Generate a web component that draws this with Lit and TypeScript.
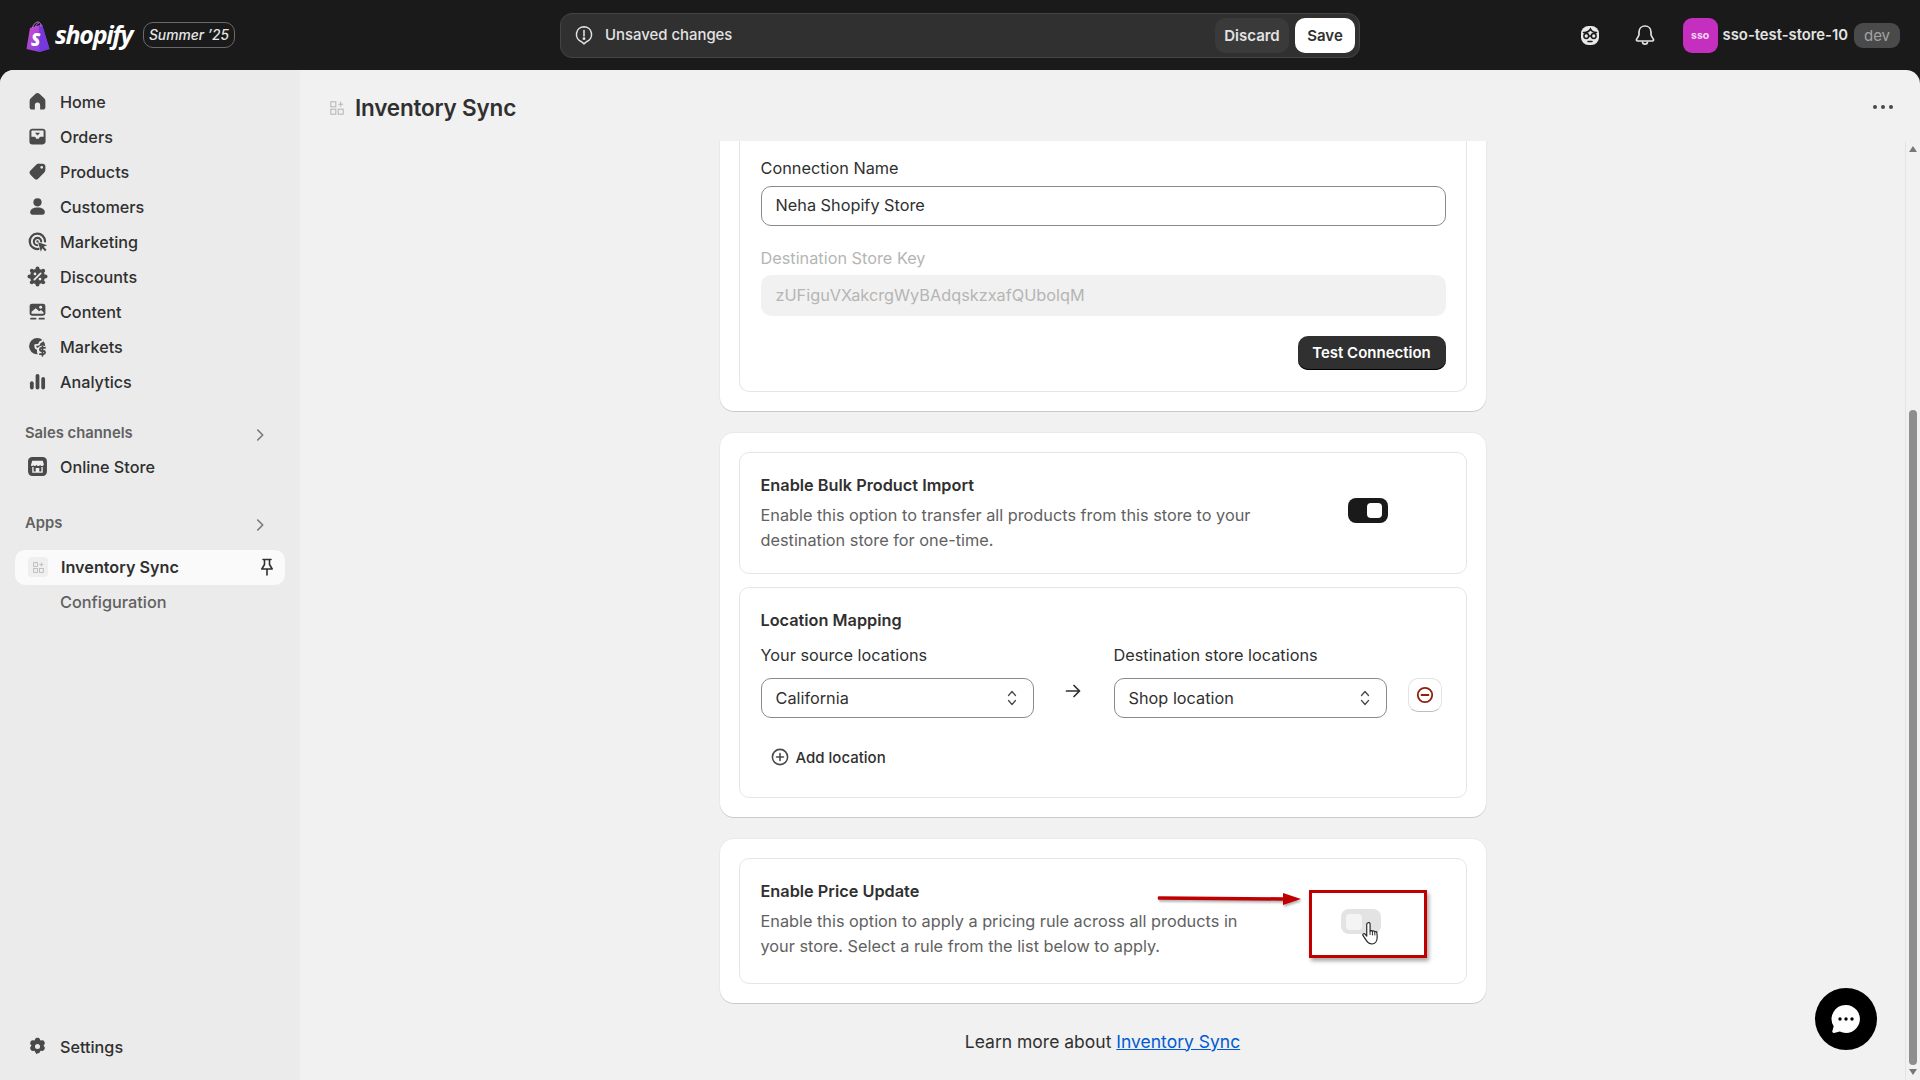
import { LitElement, html, css, svg } from "lit";
import { customElement } from "lit/decorators.js";

const BG = "#ebebeb";
const I: Record<string, any> = {
  home: svg`<path fill-rule="evenodd" d="M10 2c-.7 0-1.300.3-1.800.7L3.600 6.800c-.7.6-1.100 1.500-1.100 2.400v6.200c0 1.300 1 2.300 2.300 2.300h2.700V13.500a2.500 2.500 0 0 1 5 0v4.200h2.700c1.300 0 2.300-1 2.300-2.300V9.200c0-.9-.4-1.800-1.100-2.400l-4.600-4.100C11.300 2.300 10.700 2 10 2Z"/>`,
  orders: svg`<path fill-rule="evenodd" d="M5 2.500h10c1.500 0 2.700 1.200 2.700 2.700v9.600c0 1.500-1.200 2.700-2.700 2.700H5a2.700 2.700 0 0 1-2.700-2.700V5.200C2.300 3.700 3.500 2.500 5 2.500Zm-.8 2.300v5.400h2.900c.5 0 .9.300 1.100.7l.6 1.300h2.400l.6-1.300c.2-.4.6-.7 1.100-.7h2.900V4.800c0-.3-.2-.5-.5-.5H4.700c-.3 0-.5.200-.5.500Z"/><path d="M7.500 6.500h5L10 9z"/>`,
  products: svg`<path fill-rule="evenodd" d="M11.600 2.500h3.400c1.400 0 2.500 1.100 2.500 2.500v3.400c0 .9-.4 1.800-1 2.500l-5.900 5.900a2.500 2.500 0 0 1-3.500 0l-4-4a2.500 2.500 0 0 1 0-3.500l5.900-5.900c.7-.6 1.600-1 2.600-1ZM14 7.300a1.300 1.300 0 1 0 0-2.600 1.300 1.300 0 0 0 0 2.600Z"/>`,
  customers: svg`<circle cx="10" cy="6" r="3.900"/><path d="M3 15.700c0-3 2.800-4.700 7-4.700s7 1.700 7 4.700c0 1.200-1 2.100-2.200 2.100H5.200C4 17.800 3 16.900 3 15.700Z"/>`,
  marketing: svg`<path d="M11 17.100A7.300 7.300 0 1 1 17.200 10" fill="none" stroke="currentColor" stroke-width="2.100" stroke-linecap="round"/><path d="M9.800 13.500A3.500 3.500 0 1 1 13.500 10" fill="none" stroke="currentColor" stroke-width="2" stroke-linecap="round"/><circle cx="10" cy="10" r="1.100"/><path d="M10.600 10.600l8.600 3-3.300 1.500 2.700 2.800-1.400 1.300-2.600-2.800-1.400 3.300z"/>`,
  discounts: svg`<circle cx="10" cy="10" r="7.300"/>${[0, 45, 90, 135, 180, 225, 270, 315].map((a) => svg`<circle cx=${10 + 7.600 * Math.cos((a * Math.PI) / 180)} cy=${10 + 7.600 * Math.sin((a * Math.PI) / 180)} r="1.900"/>`)}<circle cx="7.600" cy="7.600" r="1.300" fill="${BG}"/><circle cx="12.400" cy="12.400" r="1.300" fill="${BG}"/><path d="M13 7l-6 6" stroke="${BG}" stroke-width="1.700" stroke-linecap="round"/>`,
  content: svg`<rect x="2.500" y="2.500" width="15" height="11.500" rx="2.300"/><path d="M4.300 10.300 8.300 6.800l3.300 2.900 1.700-1.100 2.400 2v1.500H4.300z" fill="${BG}"/><circle cx="13" cy="5.900" r="1.400" fill="${BG}"/><rect x="3" y="16" width="6" height="1.700" rx=".8"/><rect x="11" y="16" width="6" height="1.700" rx=".8"/>`,
  markets: svg`<circle cx="9.700" cy="9.700" r="7.700"/><path d="M15.500 4.300 12.300 6l-1 2.200-3.500.5.400 2.600 2.600 1.500v3.700" fill="none" stroke="${BG}" stroke-width="1.800" stroke-linejoin="round"/><circle cx="14.700" cy="14.300" r="5.300" fill="${BG}"/><path d="M17.200 11.300h-3.400a1.500 1.500 0 0 0 0 3h1.900a1.500 1.500 0 0 1 0 3h-3.400M14.700 9.800v9" fill="none" stroke="currentColor" stroke-width="1.700" stroke-linecap="round"/>`,
  analytics: svg`<rect x="2.800" y="9.800" width="3.600" height="7.700" rx="1.800"/><rect x="8.200" y="2.800" width="3.600" height="14.700" rx="1.800"/><rect x="13.600" y="5.800" width="3.600" height="11.700" rx="1.800"/>`,
  store: svg`<rect x="1" y="1" width="18" height="18" rx="4"/><path d="M5 4.500h10l1 3.300c0 1-.8 1.700-1.700 1.700-.8 0-1.600-.5-1.800-1.200-.3.700-1 1.200-1.700 1.200s-1.500-.4-1.800-1.200c-.3.800-1 1.200-1.800 1.200S6.400 9 6.200 8.300C6 9 5.400 9.500 4.700 9.500 4 9.500 3.500 8.700 4 7.800z" fill="#f0f0f0"/><path d="M5 10.500h1.300v4.200h2v-3.200h3.400v3.200h2v-4.200H15V16H5z" fill="#f0f0f0"/>`,
  settings: svg`<path fill-rule="evenodd" d="M8.300 2.300c.5-.9 2.900-.9 3.400 0l.7 1.500 1.600-.2c1-.1 2.200 2 1.700 2.900l-.9 1.300.9 1.300c.5.900-.7 3-1.700 2.900l-1.600-.2-.7 1.500c-.5.900-2.900.9-3.400 0l-.7-1.500-1.600.2c-1 .1-2.200-2-1.700-2.900l.9-1.300-.9-1.300c-.5-.9.700-3 1.700-2.900l1.600.2ZM10 10.500a2 2 0 1 0 0-4 2 2 0 0 0 0 4Z" transform="translate(-2 -.2) scale(1.200)"/>`,
};

const icon = (k: string, cls = "ic") => html`<svg class=${cls} viewBox="0 0 20 20" fill="currentColor">${I[k]}</svg>`;

const appGlyph = html`<svg class="appg" viewBox="0 0 14 14" fill="none" stroke="currentColor" stroke-width="1.100"><rect x=".8" y=".8" width="5" height="5"/><rect x=".8" y="8.200" width="5" height="5"/><rect x="8.200" y="8.200" width="5" height="5"/><path d="M10.700 .8v5M8.200 3.300h5"/></svg>`;

const chevR = html`<svg class="chev" viewBox="0 0 20 20" fill="none" stroke="currentColor" stroke-width="1.800" stroke-linecap="round" stroke-linejoin="round"><path d="M7.500 4.500 13 10l-5.500 5.500"/></svg>`;

const updown = html`<svg class="ud" viewBox="0 0 12 20" fill="none" stroke="currentColor" stroke-width="1.300" stroke-linecap="round" stroke-linejoin="round"><path d="M2.500 7.500 6 3.500l3.500 4M2.500 12.500 6 16.500l3.500-4"/></svg>`;

const nav = [
  ["home", "Home"], ["orders", "Orders"], ["products", "Products"], ["customers", "Customers"],
  ["marketing", "Marketing"], ["discounts", "Discounts"], ["content", "Content"], ["markets", "Markets"], ["analytics", "Analytics"],
];

@customElement("app-root")
export class AppRoot extends LitElement {
  static styles = css`
    :host { display: block; width: 1920px; height: 1080px; overflow: hidden; background: #1a1a1a; font-family: Inter, "Liberation Sans", sans-serif; color: #303030; font-size: 16.300px; }
    * { box-sizing: border-box; }
    .top { height: 70px; display: flex; align-items: center; padding: 0 20px 0 26px; position: relative; }
    .logo { display: flex; align-items: center; gap: 5px; width: 117px; }
    .bag { width: 24px; height: 31px; margin-top: 2px; flex: none; }
    .word { font: italic 700 25px "Open Sans", sans-serif; color: #fff; letter-spacing: -1.300px; line-height: 1; margin-top: -2px; }
    .season { width: 92px; height: 26px; border: 1px solid #6a6a6a; border-radius: 10px; display: flex; align-items: center; justify-content: center; color: #e6e6e6; font-style: italic; font-size: 13.800px; font-weight: 500; }
    .bar { position: absolute; left: 560px; top: 13px; width: 800px; height: 45px; background: #303030; border: 1px solid #444; border-radius: 12px; display: flex; align-items: center; padding: 0 4px 0 12px; color: #e3e3e3; }
    .bar svg { width: 22px; height: 22px; margin-right: 10px; margin-top: -1px; flex: none; }
    .bar .msg { flex: 1; font-size: 14.900px; font-weight: 500; margin-top: -1px; }
    .btn { height: 35px; border-radius: 10px; display: flex; align-items: center; justify-content: center; font-weight: 600; font-size: 15px; }
    .discard { width: 74px; background: #3a3a3a; color: #e3e3e3; margin-right: 6px; }
    .save { width: 60px; background: #fff; color: #303030; }
    .right { margin-left: auto; display: flex; align-items: center; }
    .tico { width: 24px; height: 24px; color: #e3e3e3; flex: none; }
    .right .face { margin-right: 31px; }
    .right .bell { margin-right: 26px; }
    .avatar { width: 35px; height: 35px; border-radius: 9px; background: #c42fc0; color: #f9d8f6; font-size: 10.500px; font-weight: 700; display: flex; align-items: center; justify-content: center; margin-right: 5px; }
    .shop { color: #e3e3e3; font-size: 14.800px; font-weight: 600; margin-right: 6px; white-space: nowrap; }
    .dev { width: 46px; height: 25px; border-radius: 9px; background: #4a4a4a; color: #a3a3a3; font-size: 15px; display: flex; align-items: center; justify-content: center; }

    .body { height: 1010px; display: flex; background: #f1f1f1; border-radius: 14px 14px 0 0; overflow: hidden; }
    .side { width: 300px; flex: none; background: #ebebeb; padding: 14px 15px 16px; display: flex; flex-direction: column; }
    .item { height: 35px; display: flex; align-items: center; padding-left: 12px; gap: 12px; font-weight: 500; font-size: 16.200px; color: #303030; flex: none; }
    .ic { width: 21px; height: 21px; color: #4a4a4a; flex: none; }
    .sec { height: 35px; display: flex; align-items: center; justify-content: space-between; padding: 0 16px 0 10px; font-size: 14.800px; font-weight: 600; color: #616161; flex: none; }
    .chev { width: 18px; height: 18px; color: #777; margin-top: 4px; }
    .sec.a { margin-top: 16px; margin-bottom: -1px; }
    .sec.b { margin-top: 21px; margin-bottom: 9.500px; }
    .item.active { background: #fafafa; border-radius: 10px; font-weight: 600; height: 35px; padding-right: 8px; }
    .tile { width: 20px; height: 20px; border-radius: 4px; background: #efefef; color: #b9b9b9; display: flex; align-items: center; justify-content: center; margin: 0 1px 0 1px; flex: none; }
    .appg { width: 11px; height: 11px; }
    .pin { width: 20px; height: 20px; margin-left: auto; color: #303030; }
    .sub { height: 35px; padding-left: 45px; display: flex; align-items: center; color: #616161; font-weight: 500; flex: none; }
    .settings { margin-top: auto; }

    .main { flex: 1; min-width: 0; display: flex; flex-direction: column; }
    .head { height: 71px; flex: none; display: flex; align-items: center; padding: 4px 27px 0 30px; }
    .head .appg { width: 14px; height: 14px; color: #b9b9b9; margin-right: 11px; }
    .head h1 { margin: 0; font-size: 22.500px; font-weight: 600; color: #303030; letter-spacing: -.2px; }
    .dots { margin-left: auto; display: flex; gap: 4px; margin-top: -2px; }
    .dots i { width: 4px; height: 4px; border-radius: 50%; background: #4a4a4a; }
    .scrollwrap { flex: 1; min-height: 0; display: flex; }
    .scroll { flex: 1; min-width: 0; display: flex; flex-direction: column; align-items: center; gap: 22px; overflow: hidden; }
    .sbar { width: 15px; flex: none; background: #f1f1f1; border-left: 1px solid #e4e4e4; display: flex; flex-direction: column; align-items: center; position: relative; }
    .tri { width: 0; height: 0; border-left: 4.500px solid transparent; border-right: 4.500px solid transparent; }
    .tri.up { border-bottom: 6px solid #777; margin-top: 5px; }
    .tri.dn { border-top: 6px solid #777; margin-top: 4px; }
    .thumb { width: 8px; height: 655px; background: #8e8e8e; border-radius: 4px; margin-top: 258px; }

    .card { width: 766px; background: #fff; border-radius: 14px; padding: 19px; box-shadow: 0 1px 0 rgba(0,0,0,.13), 0 0 0 1px rgba(0,0,0,.03); display: flex; flex-direction: column; gap: 13px; flex: none; }
    .card.first { border-radius: 0 0 14px 14px; padding-top: 0; }
    .inner { border: 1px solid #e6e6e6; border-radius: 10px; padding: 19px 20px 19px 21px; }
    .first .inner { border-top: 0; border-radius: 0 0 10px 10px; padding: 15px 20px 21px 21px; }
    .inner.bulk { padding-top: 19.500px; padding-bottom: 21.300px; }
    .inner.bulk .desc { margin-top: 6.700px; }
    .inner.loc { padding-top: 19.500px; padding-bottom: 19.500px; }
    .inner.price { padding-top: 20.200px; padding-bottom: 25px; }
    .inner.price .desc { margin-top: 6px; }
    label, .lbl { display: block; line-height: 24px; color: #303030; font-size: 16.300px; font-weight: 400; }
    .input { height: 40px; border: 1px solid #8a8a8a; border-radius: 10px; display: flex; align-items: center; padding: 0 14px 2px; margin-top: 6px; color: #303030; }
    .lbl.dis { color: #b5b5b5; margin-top: 20px; }
    .input.dis { height: 41px; border: 0; background: #f1f1f1; color: #b5b5b5; margin-top: 5px; padding-left: 15px; }
    .tc { width: 148px; height: 34.500px; background: #303030; color: #fff; border-radius: 10px; margin: 19.500px 0 0 auto; display: flex; align-items: center; justify-content: center; font-weight: 600; font-size: 15px; box-shadow: inset 0 -1px 0 #000; }
    .row { display: flex; align-items: flex-start; }
    .title { line-height: 24px; font-weight: 600; font-size: 16.300px; color: #303030; }
    .desc { line-height: 24.500px; color: #616161; margin-top: 6px; width: 500px; }
    .toggle { width: 40px; height: 25px; border-radius: 8px; flex: none; position: relative; }
    .toggle i { position: absolute; top: 5px; width: 15px; height: 15px; border-radius: 4px; }
    .toggle.on { background: #1a1a1a; margin: 25.700px 0 0 87px; }
    .toggle.on i { left: 19px; background: #fff; }
    .toggle.off { background: #e3e3e3; margin: 29.800px 0 0 80px; }
    .toggle.off i { left: 5px; width: 16px; height: 16px; background: #f4f4f4; }
    .labels { display: grid; grid-template-columns: 273px 273px; column-gap: 80px; margin-top: 11px; }
    .map { display: flex; margin-top: 11px; align-items: flex-start; }
    .sel { width: 273px; height: 40px; border: 1px solid #8a8a8a; border-radius: 10px; display: flex; align-items: center; justify-content: space-between; padding: 0 14px 0 14px; flex: none; }
    .ud { width: 12px; height: 20px; color: #4a4a4a; margin-right: 1px; }
    .arr { width: 80px; display: flex; justify-content: center; padding-top: 3px; flex: none; }
    .arr svg { width: 20px; height: 20px; color: #303030; margin-left: -1px; }
    .rm { width: 34px; height: 34px; border-radius: 10px; background: #fff; border: 1px solid #e3e3e3; border-bottom-color: #bdbdbd; margin-left: 21px; display: flex; align-items: center; justify-content: center; color: #8e1f0b; }
    .rm svg { width: 20px; height: 20px; }
    .add { height: 40px; margin-top: 19.500px; display: flex; align-items: center; padding-left: 9px; gap: 6px; font-weight: 500; font-size: 15px; }
    .add svg { width: 20px; height: 20px; color: #4a4a4a; }
    .foot { flex: none; text-align: center; font-size: 17.500px; color: #303030; margin-top: 4.500px; line-height: 24px; }
    .foot a { color: #005bd3; text-decoration: underline; }
    .annot { position: absolute; pointer-events: none; }
    .rbox { left: -32px; top: -19px; width: 118px; height: 68px; border: 3px solid #c00000; box-shadow: 2px 3px 4px rgba(0,0,0,.35); }
    .rarrow { left: -182px; top: -18px; width: 142px; height: 16px; overflow: visible; filter: drop-shadow(1px 2px 1px rgba(0,0,0,.3)); }
    .hand { left: 21px; top: 12px; width: 19px; height: 25px; }
    .chat { position: absolute; left: 1815px; top: 988px; width: 62px; height: 62px; border-radius: 50%; background: #000; display: flex; align-items: center; justify-content: center; }
    .chat svg { width: 32px; height: 32px; }
    .toplayer { position: relative; }
  `;

  render() {
    return html`
      <div class="toplayer">
        <div class="top">
          <div class="logo">
            <svg class="bag" viewBox="0 0 24 31">
              <defs><linearGradient id="g" x1="0" y1="0" x2="1" y2="1"><stop offset="0" stop-color="#d94bd0"/><stop offset="1" stop-color="#6b3cdc"/></linearGradient></defs>
              <path d="M4 7 16 3.500 23.500 28 13.500 31 .5 28z" fill="url(#g)"/>
              <path d="M16 3.500 23.500 28 13.500 31 13 4.500z" fill="#7438dc"/>
              <path d="M6.500 7c.5-3 3-6 5.500-6 2 0 3 2 3 4.500M9.500 6c.5-2 1.500-3.500 3-3.500" fill="none" stroke="#c27cd6" stroke-width="1"/>
              <text x="5" y="25" font-family="Open Sans" font-style="italic" font-weight="800" font-size="17" fill="#fff">S</text>
            </svg>
            <span class="word">shopify</span>
          </div>
          <div class="season">Summer ’25</div>

          <div class="bar">
            <svg viewBox="0 0 20 20" fill="none" stroke="currentColor" stroke-width="1.400"><path d="M10 2.500a7 7 0 0 0-2.200 13.600L10 18l2.200-1.900A7 7 0 0 0 10 2.500Z" stroke-linejoin="round"/><path d="M10 6v5" stroke-linecap="round"/><circle cx="10" cy="13.300" r=".6" fill="currentColor"/></svg>
            <span class="msg">Unsaved changes</span>
            <div class="btn discard">Discard</div>
            <div class="btn save">Save</div>
          </div>

          <div class="right">
            <svg class="tico face" viewBox="0 0 24 24"><rect x="3" y="3" width="18" height="19" rx="7.500" fill="#e8e8e8"/><path d="M5.500 9.500c3 .2 5.500-1 7-3.500.8 2 3 3.500 6 3.500" fill="none" stroke="#1a1a1a" stroke-width="1.500" stroke-linecap="round"/><circle cx="8.300" cy="13" r="2.400" fill="none" stroke="#1a1a1a" stroke-width="1.500"/><circle cx="15.700" cy="13" r="2.400" fill="none" stroke="#1a1a1a" stroke-width="1.500"/><path d="M10.500 13h3M10 18.500h4" stroke="#1a1a1a" stroke-width="1.500" stroke-linecap="round"/></svg>
            <svg class="tico bell" viewBox="0 0 24 24" fill="none" stroke="currentColor" stroke-width="1.700" stroke-linejoin="round"><path d="M12 3c-3.500 0-6 2.600-6 6v2.500c0 1.800-2 3.500-2.500 5-.2.800.3 1.500 1 1.500h15c.7 0 1.200-.7 1-1.500-.5-1.500-2.500-3.200-2.500-5V9c0-3.400-2.500-6-6-6Z"/><path d="M9.500 18.500c0 1.500 1 2.700 2.500 2.700s2.500-1.200 2.500-2.700"/></svg>
            <div class="avatar">sso</div>
            <span class="shop">sso-test-store-10</span>
            <div class="dev">dev</div>
          </div>
        </div>

        <div class="body">
          <aside class="side">
            ${nav.map(([k, t]) => html`<div class="item">${icon(k)}<span>${t}</span></div>`)}
            <div class="sec a"><span>Sales channels</span>${chevR}</div>
            <div class="item">${icon("store")}<span>Online Store</span></div>
            <div class="sec b"><span>Apps</span>${chevR}</div>
            <div class="item active">
              <span class="tile">${appGlyph}</span><span>Inventory Sync</span>
              <svg class="pin" viewBox="0 0 20 20" fill="none" stroke="currentColor" stroke-width="1.600" stroke-linejoin="round" stroke-linecap="round"><path d="M6 2.500h8M7.500 2.500v5L4.800 12h10.400l-2.700-4.500v-5M10 12v6"/></svg>
            </div>
            <div class="sub">Configuration</div>
            <div class="item settings">${icon("settings")}<span>Settings</span></div>
          </aside>

          <main class="main">
            <div class="head">
              ${appGlyph}
              <h1>Inventory Sync</h1>
              <div class="dots"><i></i><i></i><i></i></div>
            </div>
            <div class="scrollwrap">
              <div class="scroll">
                <section class="card first">
                  <div class="inner">
                    <label>Connection Name</label>
                    <div class="input">Neha Shopify Store</div>
                    <div class="lbl dis">Destination Store Key</div>
                    <div class="input dis">zUFiguVXakcrgWyBAdqskzxafQUbolqM</div>
                    <div class="tc">Test Connection</div>
                  </div>
                </section>

                <section class="card">
                  <div class="inner row bulk">
                    <div>
                      <div class="title">Enable Bulk Product Import</div>
                      <div class="desc">Enable this option to transfer all products from this store to your destination store for one-time.</div>
                    </div>
                    <div class="toggle on"><i></i></div>
                  </div>
                  <div class="inner loc">
                    <div class="title">Location Mapping</div>
                    <div class="labels"><span class="lbl">Your source locations</span><span class="lbl">Destination store locations</span></div>
                    <div class="map">
                      <div class="sel"><span>California</span>${updown}</div>
                      <div class="arr"><svg viewBox="0 0 20 20" fill="none" stroke="currentColor" stroke-width="1.700" stroke-linecap="round" stroke-linejoin="round"><path d="M3.500 10h13M11 4.500l5.500 5.500-5.500 5.500"/></svg></div>
                      <div class="sel"><span>Shop location</span>${updown}</div>
                      <div class="rm"><svg viewBox="0 0 20 20" fill="none" stroke="currentColor" stroke-width="1.800" stroke-linecap="round"><circle cx="10" cy="10" r="7.200"/><path d="M6.500 10h7"/></svg></div>
                    </div>
                    <div class="add"><svg viewBox="0 0 20 20" fill="none" stroke="currentColor" stroke-width="1.600" stroke-linecap="round"><circle cx="10" cy="10" r="7.600"/><path d="M6.500 10h7M10 6.500v7"/></svg>Add location</div>
                  </div>
                </section>

                <section class="card">
                  <div class="inner row price">
                    <div>
                      <div class="title">Enable Price Update</div>
                      <div class="desc">Enable this option to apply a pricing rule across all products in your store. Select a rule from the list below to apply.</div>
                    </div>
                    <div class="toggle off">
                      <i></i>
                      <div class="annot rbox"></div>
                      <svg class="annot rarrow" viewBox="0 0 142 16"><path d="M0 7.500 L124 8.500 L124 7.500 L0 6.500Z" stroke="#c00000" stroke-width="2.500" stroke-linejoin="round" fill="#c00000"/><path d="M124 2l18 6-18 6z" fill="#c00000"/></svg>
                      <svg class="annot hand" viewBox="0 0 20 26"><path d="M6 2c1-1 2.500-.5 2.500 1v7.500c.5-.8 2-.7 2.500.3.500-.8 2-.6 2.500.4.600-.6 2.100-.3 2.200 1l.3 4.500c0 4-2 7.300-5.500 7.300-3 0-4.500-1.200-6.200-4L1 15c-.7-1.300 1-2.500 2-1.500l2 2.300V3c0-.5.500-.9 1-1Z" fill="#fff" stroke="#222" stroke-width="1.200" stroke-linejoin="round"/><path d="M8.500 10.500v4M11 11v4M13.500 11.500v3.500" stroke="#222" stroke-width="1"/></svg>
                    </div>
                  </div>
                </section>

                <div class="foot">Learn more about <a>Inventory Sync</a></div>
              </div>
              <div class="sbar">
                <div class="tri up"></div>
                <div class="thumb"></div>
                <div class="tri dn"></div>
              </div>
            </div>
          </main>
        </div>

        <div class="chat">
          <svg viewBox="0 0 32 32"><path d="M16 2a14 14 0 1 1-6.200 26.600L4 30c-1 .2-1.900-.7-1.700-1.700l1.400-5A14 14 0 0 1 16 2Z" fill="#fff"/><circle cx="10" cy="16" r="1.700" fill="#000"/><circle cx="16" cy="16" r="1.700" fill="#000"/><circle cx="22" cy="16" r="1.700" fill="#000"/></svg>
        </div>
      </div>
    `;
  }
}
